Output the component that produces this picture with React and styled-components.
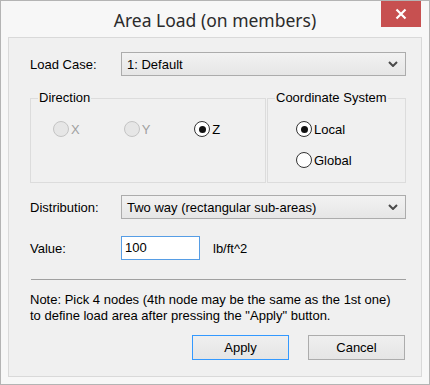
import React from "react"
import styled, { createGlobalStyle } from "styled-components"

const GlobalStyle = createGlobalStyle`
  html, body {
    margin: 0;
    padding: 0;
    background: #f7f7f7;
  }
  body {
    font-family: "Liberation Sans", Arial, sans-serif;
    font-size: 13px;
    color: #000;
  }
`

function Radio({ checked, disabled, label }) {
  return (
    <RadioRow>
      <RadioCircle $checked={checked} $disabled={disabled} />
      <RadioLabel $disabled={disabled}>{label}</RadioLabel>
    </RadioRow>
  )
}

function Chevron() {
  return (
    <ChevronSvg width="10" height="6" viewBox="0 0 10 6">
      <path d="M1 1 L5 5 L9 1" fill="none" stroke="#4a4a4a" strokeWidth="2" />
    </ChevronSvg>
  )
}

function App() {
  return (
    <Window>
      <GlobalStyle />
      <TitleBar>
        <Title>Area Load (on members)</Title>
        <CloseButton>
          <svg width="12" height="12" viewBox="0 0 12 12">
            <path d="M1.5 1.5 L10.5 10.5 M10.5 1.5 L1.5 10.5" stroke="#fff" strokeWidth="2.2" />
          </svg>
        </CloseButton>
      </TitleBar>
      <Client>
        <FieldRow>
          <Label>Load Case:</Label>
          <Select>
            <span>1: Default</span>
            <Chevron />
          </Select>
        </FieldRow>

        <Groups>
          <Group $width="236px">
            <Legend>Direction</Legend>
            <DirectionRow>
              <Radio disabled label="X" />
              <Radio disabled label="Y" />
              <Radio checked label="Z" />
            </DirectionRow>
          </Group>
          <Group $width="139px">
            <Legend>Coordinate System</Legend>
            <CoordColumn>
              <Radio checked label="Local" />
              <Radio label="Global" />
            </CoordColumn>
          </Group>
        </Groups>

        <FieldRow $top="12px">
          <Label>Distribution:</Label>
          <Select>
            <span>Two way (rectangular sub-areas)</span>
            <Chevron />
          </Select>
        </FieldRow>

        <FieldRow $top="17px">
          <Label>Value:</Label>
          <ValueInput defaultValue="100" />
          <Unit>lb/ft^2</Unit>
        </FieldRow>

        <Separator />

        <Note>
          Note: Pick 4 nodes (4th node may be the same as the 1st one)
          <br />
          to define load area after pressing the "Apply" button.
        </Note>

        <Buttons>
          <Button $primary>Apply</Button>
          <Button>Cancel</Button>
        </Buttons>
      </Client>
    </Window>
  )
}

export default App

const Window = styled.div`
  width: 430px;
  height: 385px;
  box-sizing: border-box;
  border: 1px solid #b4b4b4;
  background: #f7f7f7;
  display: flex;
  flex-direction: column;
`

const TitleBar = styled.div`
  height: 36px;
  position: relative;
  display: flex;
  align-items: center;
  justify-content: center;
`

const Title = styled.div`
  font-family: "Noto Sans", "Open Sans", sans-serif;
  font-size: 17.5px;
  color: #2b2b2b;
  padding-top: 1px;
`

const CloseButton = styled.div`
  position: absolute;
  right: 8px;
  top: 0;
  width: 40px;
  height: 26px;
  background: #c75050;
  display: flex;
  align-items: center;
  justify-content: center;
`

const Client = styled.div`
  flex: 1;
  margin: 0 7px 7px 7px;
  border: 1px solid #d9d9d9;
  background: #f0f0f0;
  padding: 14px 15px 0 21px;
  display: flex;
  flex-direction: column;
`

const FieldRow = styled.div`
  display: flex;
  align-items: center;
  margin-top: ${(p) => p.$top || "0"};
`

const Label = styled.div`
  width: 91px;
  flex: none;
`

const Select = styled.div`
  flex: 1;
  height: 24px;
  box-sizing: border-box;
  border: 1px solid #acacac;
  background: linear-gradient(#f2f2f2, #e6e6e6);
  display: flex;
  align-items: center;
  justify-content: space-between;
  padding: 0 7px 0 5px;
`

const ChevronSvg = styled.svg`
  display: block;
`

const Groups = styled.div`
  display: flex;
  gap: 1px;
  margin-top: 22px;
`

const Group = styled.div`
  position: relative;
  width: ${(p) => p.$width};
  height: 85px;
  box-sizing: border-box;
  border: 1px solid #dcdcdc;
`

const Legend = styled.div`
  position: absolute;
  top: -9px;
  left: 7px;
  padding: 0 1px;
  background: #f0f0f0;
  line-height: 16px;
`

const DirectionRow = styled.div`
  display: flex;
  padding: 22px 0 0 22px;
  & > div {
    width: 72px;
  }
`

const CoordColumn = styled.div`
  display: flex;
  flex-direction: column;
  gap: 15px;
  padding: 22px 0 0 28px;
`

const RadioRow = styled.div`
  display: flex;
  align-items: center;
  height: 16px;
`

const RadioCircle = styled.div`
  position: relative;
  width: 16px;
  height: 16px;
  box-sizing: border-box;
  border-radius: 50%;
  border: 1px solid ${(p) => (p.$disabled ? "#c4c4c4" : "#333")};
  background: ${(p) => (p.$disabled ? "#e6e6e6" : "#fff")};
  flex: none;

  &::after {
    content: "";
    display: ${(p) => (p.$checked ? "block" : "none")};
    position: absolute;
    left: 3.5px;
    top: 3.5px;
    width: 7px;
    height: 7px;
    border-radius: 50%;
    background: #111;
  }
`

const RadioLabel = styled.span`
  margin-left: 2px;
  color: ${(p) => (p.$disabled ? "#a0a0a0" : "#000")};
`

const ValueInput = styled.input`
  width: 79px;
  height: 24px;
  box-sizing: border-box;
  border: 1px solid #569de5;
  outline: none;
  padding: 0 3px 2px 3px;
  font-family: "Liberation Sans", Arial, sans-serif;
  font-size: 13px;
  background: #fff;
`

const Unit = styled.span`
  margin-left: 13px;
`

const Separator = styled.div`
  height: 1px;
  background: #a0a0a0;
  margin: 19px 0 0 1px;
`

const Note = styled.div`
  margin-top: 12px;
  line-height: 16px;
`

const Buttons = styled.div`
  display: flex;
  justify-content: flex-end;
  gap: 19px;
  margin-top: 11px;
  padding-right: 1px;
`

const Button = styled.div`
  width: 97px;
  height: 25px;
  box-sizing: border-box;
  border: 1px solid ${(p) => (p.$primary ? "#3399ff" : "#acacac")};
  background: linear-gradient(#efefef, #e5e5e5);
  display: flex;
  align-items: center;
  justify-content: center;
`
